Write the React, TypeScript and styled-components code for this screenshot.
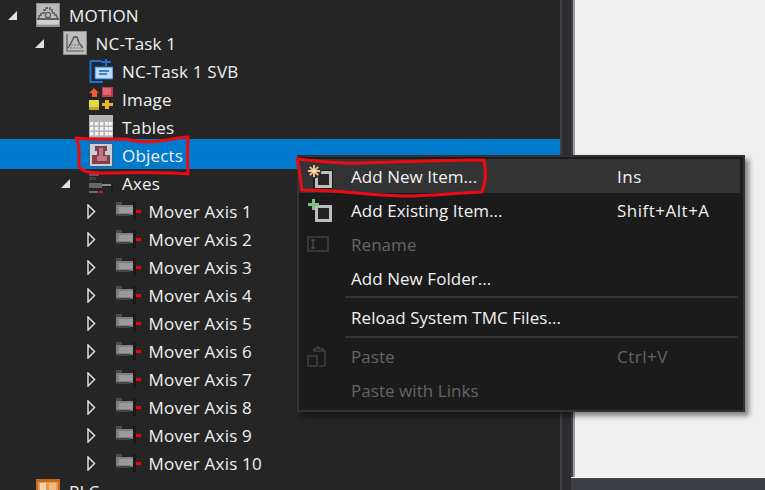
import React from 'react';
import styled, { createGlobalStyle } from 'styled-components';

const Global = createGlobalStyle`
  html, body { margin: 0; padding: 0; background: #252526; overflow: hidden; }
  * { box-sizing: border-box; }
`;

const Shell = styled.div`
  position: relative;
  display: flex;
  width: 765px;
  height: 490px;
  overflow: hidden;
  font-family: "Open Sans", "Noto Sans", sans-serif;
  font-size: 17px;
`;

const TreePane = styled.div`
  width: 560px;
  height: 490px;
  padding-top: 1px;
  background: #252526;
  overflow: hidden;
  flex: none;
  letter-spacing: 0.2px;
`;

const Splitter = styled.div`
  width: 11px;
  flex: none;
  background: #2d2d30;
  border-left: 2px solid #3f3f46;
`;

const DocColumn = styled.div`
  flex: 1;
  display: flex;
  flex-direction: column;
`;

const DocArea = styled.div`
  flex: 1;
  background: #efefef;
  border-left: 2px solid #3f3f46;
  box-shadow: inset 2px 0 0 #9a9a9a;
`;

const StatusStrip = styled.div`
  height: 13px;
  flex: none;
  background: #3f3f46;
  border-top: 1px solid #ffffff;
`;

const Row = styled.div<{ $level: number; $selected?: boolean }>`
  display: flex;
  align-items: center;
  height: ${p => (p.$selected ? 30 : 28)}px;
  margin-top: ${p => (p.$selected ? -2 : 0)}px;
  padding-top: ${p => (p.$selected ? 2 : 0)}px;
  padding-left: ${p => p.$level * 26.5}px;
  background: ${p => (p.$selected ? '#007acc' : 'transparent')};
  color: #f1f1f1;
  white-space: nowrap;
`;

const Expander = styled.span`
  width: 36px;
  height: 28px;
  flex: none;
  display: flex;
  align-items: center;
  padding-left: 7px;
`;

const IconSlot = styled.span`
  width: 33px;
  height: 24px;
  flex: none;
  display: flex;
  align-items: center;
`;

const Label = styled.span`
  line-height: 28px;
  padding-top: 1px;
`;

const Menu = styled.div`
  position: absolute;
  left: 297px;
  top: 155px;
  width: 448px;
  height: 257px;
  padding: 2px 3px 2px 0;
  background: #1b1b1c;
  border: 2px solid #333337;
  box-shadow: 4px 4px 5px rgba(0, 0, 0, 0.45);
  color: #f1f1f1;
  letter-spacing: 0.05px;
`;

const MenuItem = styled.div<{ $active?: boolean; $disabled?: boolean }>`
  display: flex;
  align-items: center;
  height: 34px;
  background: ${p => (p.$active ? '#333334' : 'transparent')};
  color: ${p => (p.$disabled ? '#656565' : '#f1f1f1')};
`;

const MenuIcon = styled.span`
  width: 52px;
  flex: none;
  display: flex;
  align-items: center;
  padding-left: 8px;
`;

const MenuText = styled.span`
  width: 266px;
  flex: none;
`;

const Shortcut = styled.span`
  letter-spacing: 0.5px;
`;

const Separator = styled.div`
  height: 2px;
  margin: 1px 2px 1px 46px;
  background: #333337;
`;

const ReloadItem = styled(MenuItem)`
  height: 36px;
`;

const Scribble = styled.svg`
  position: absolute;
  left: 0;
  top: 0;
  pointer-events: none;
`;

const Open = () => (
  <svg width="11" height="11" viewBox="0 0 11 11"><path d="M10 1v9H1z" fill="#e2e2e2" /></svg>
);
const Closed = () => (
  <svg width="9" height="15" viewBox="0 0 9 15"><path d="M1 1l6.5 6.5L1 14z" fill="none" stroke="#dcdcdc" strokeWidth="1.5" /></svg>
);

const MotionIcon = () => (
  <svg width="24" height="24" viewBox="0 0 24 24">
    <rect width="24" height="24" fill="#8f8f8f" />
    <rect x="1" y="1" width="22" height="21" fill="#b9b9b9" />
    <path
      d="M3 15v-3h2v-2h3V7h2V5h4v2h2v3h3v2h2v3"
      fill="none" stroke="#4f4f4f" strokeWidth="1.4" strokeDasharray="3 1"
    />
    <circle cx="12" cy="12" r="2.6" fill="none" stroke="#5e5e5e" strokeWidth="1.2" />
    <rect x="1" y="15" width="22" height="2" fill="#5f5f5f" />
    <rect x="1" y="17" width="22" height="4" fill="#cfcfcf" />
  </svg>
);
const TaskIcon = () => (
  <svg width="24" height="24" viewBox="0 0 24 24">
    <rect width="24" height="24" fill="#8f8f8f" />
    <rect x="1" y="1" width="22" height="22" fill="#bdbdbd" />
    <path d="M4 3v17h17" fill="none" stroke="#5a5a5a" strokeWidth="1.2" />
    <path d="M5 17l3-5 3-6h3l2 6 4 5" fill="none" stroke="#4c4c4c" strokeWidth="1.3" />
    <path d="M8 14h9M7 17h12" stroke="#777" strokeWidth="1.2" strokeDasharray="2 1" />
  </svg>
);
const SvbIcon = () => (
  <svg width="24" height="24" viewBox="0 0 24 24">
    <path d="M12 2H1.5v21H14" fill="none" stroke="#1a73d8" strokeWidth="2" />
    <path d="M12 3h10M17 0v7" stroke="#1a73d8" strokeWidth="2" />
    <rect x="6" y="8" width="18" height="12" fill="#bcdcf8" stroke="#1a73d8" />
    <path d="M10 12h10M10 15h8" stroke="#1a5fb0" strokeWidth="1.4" />
  </svg>
);
const ImageIcon = () => (
  <svg width="24" height="24" viewBox="0 0 24 24">
    <path d="M5 1l5 5H8v4H3V6H0z" fill="#f0583a" />
    <rect x="13" width="11" height="10" fill="#c23b4c" />
    <rect x="14" y="1" width="8" height="7" fill="#df6573" />
    <rect y="13" width="10" height="10" fill="#e6d94a" />
    <rect y="20" width="10" height="3" fill="#b9a92a" />
    <path d="M16 13h4v3h4v3h-4v3h-4v-3h-3v-3h3z" fill="#eeb32c" />
  </svg>
);
const TablesIcon = () => (
  <svg width="24" height="24" viewBox="0 0 24 24">
    <rect width="24" height="24" fill="#b4b4b4" />
    <rect y="22" width="24" height="2" fill="#8c8c8c" />
    {[7, 12, 17].flatMap(y =>
      [1, 6, 11, 16, 20].map(x => <rect key={`${x}-${y}`} x={x} y={y} width="3.4" height="3.4" fill="#f4f4f4" />)
    )}
  </svg>
);
const ObjectsIcon = () => (
  <svg width="24" height="24" viewBox="0 0 24 24">
    <rect width="24" height="24" fill="#3d5f8a" />
    <rect x="1" y="1" width="22" height="22" fill="#c9cdd6" />
    <path d="M6 3h12v5h-2v4h5v9H3v-9h5V8H6z" fill="#8a3c4a" />
    <path d="M10 5h4v8h4v5H8v-5h2z" fill="#b97c84" />
  </svg>
);
const AxesIcon = () => (
  <svg width="24" height="24" viewBox="0 0 24 24">
    <rect x="0" y="1" width="10" height="4" fill="#5e5e5e" />
    <rect x="0" y="6" width="7" height="3" fill="#3f3f3f" />
    <rect x="0" y="12" width="13" height="5" fill="#666" />
    <rect x="13" y="13" width="9" height="2" fill="#8a8a8a" />
    <rect x="0" y="20" width="9" height="2" fill="#6a6a6a" />
    <rect x="10" y="20" width="4" height="2" fill="#e81010" />
    <rect x="22" y="15" width="2" height="6" fill="#1a1a1a" />
  </svg>
);
const MoverIcon = () => (
  <svg width="25" height="18" viewBox="0 0 25 18">
    <rect x="0" y="0" width="6" height="3" fill="#4a4a4a" />
    <rect x="0" y="3" width="17" height="10" fill="#7f7f7f" />
    <rect x="3" y="5" width="14" height="6" fill="#9a9a9a" />
    <rect x="0" y="12" width="14" height="2" fill="#454545" />
    <rect x="17" y="0" width="3" height="18" fill="#1a1a1a" />
    <rect x="20" y="8" width="5" height="3" fill="#f40000" />
  </svg>
);
const PlcIcon = () => (
  <svg width="24" height="24" viewBox="0 0 24 24">
    <rect width="24" height="24" fill="#c46a1b" />
    <rect x="2" y="3" width="20" height="19" fill="#e39a52" />
    <rect x="4" y="4" width="6" height="16" fill="#f6d3ad" />
    <rect x="13" y="4" width="7" height="16" fill="#f1b77d" />
  </svg>
);

const NewBadge = () => (
  <svg width="26" height="26" viewBox="0 0 26 26">
    <rect x="6" y="7" width="20" height="19" fill="#1b1b1c" />
    <rect x="9.5" y="9.5" width="14" height="14" fill="#262627" stroke="#bdbdbd" strokeWidth="3" />
    <circle cx="7" cy="8" r="7.5" fill="#333334" />
    <path d="M7 2v12M1 8h12M2.8 3.8l8.4 8.4M11.2 3.8l-8.4 8.4" stroke="#f3c48e" strokeWidth="1.9" />
    <circle cx="7" cy="8" r="1.6" fill="#fbe6cc" />
  </svg>
);
const ExistingBadge = () => (
  <svg width="26" height="26" viewBox="0 0 26 26">
    <rect x="9.5" y="9.5" width="14" height="14" fill="#242425" stroke="#bdbdbd" strokeWidth="3" />
    <path d="M5 2h3v4h4v3H8v4H5V9H1V6h4z" fill="#7cc47f" />
  </svg>
);
const RenameBadge = () => (
  <svg width="24" height="16" viewBox="0 0 24 16">
    <rect x="1" y="1" width="20" height="14" fill="none" stroke="#383838" strokeWidth="2" />
    <path d="M4 4h4M4 12h4M6 4v8" stroke="#5a5a5a" />
  </svg>
);
const PasteBadge = () => (
  <svg width="20" height="22" viewBox="0 0 20 22">
    <path d="M7 6V4h2l2-2 2 2h3v2M16 6h2v15h-6" fill="none" stroke="#4d4d4d" strokeWidth="1.2" />
    <path d="M6 6h10" stroke="#4d4d4d" />
    <rect x="1" y="11" width="9" height="10" fill="none" stroke="#4d4d4d" strokeWidth="1.2" />
  </svg>
);

type TreeRow = { level: number; label: string; icon: React.ReactNode; open?: boolean; closed?: boolean; selected?: boolean };

const rows: TreeRow[] = [
  { level: 0, label: 'MOTION', icon: <MotionIcon />, open: true },
  { level: 1, label: 'NC-Task 1', icon: <TaskIcon />, open: true },
  { level: 2, label: 'NC-Task 1 SVB', icon: <SvbIcon /> },
  { level: 2, label: 'Image', icon: <ImageIcon /> },
  { level: 2, label: 'Tables', icon: <TablesIcon /> },
  { level: 2, label: 'Objects', icon: <ObjectsIcon />, selected: true },
  { level: 2, label: 'Axes', icon: <AxesIcon />, open: true },
  ...Array.from({ length: 10 }, (_, i) => ({
    level: 3,
    label: `Mover Axis ${i + 1}`,
    icon: <MoverIcon />,
    closed: true,
  })),
  { level: 0, label: 'PLC', icon: <PlcIcon /> },
];

export default function App() {
  return (
    <Shell>
      <Global />
      <TreePane>
        {rows.map(r => (
          <Row key={r.label} $level={r.level} $selected={r.selected}>
            <Expander>{r.open && <Open />}{r.closed && <Closed />}</Expander>
            <IconSlot>{r.icon}</IconSlot>
            <Label>{r.label}</Label>
          </Row>
        ))}
      </TreePane>
      <Splitter />
      <DocColumn>
        <DocArea />
        <StatusStrip />
      </DocColumn>
      <Menu>
        <MenuItem $active>
          <MenuIcon><NewBadge /></MenuIcon>
          <MenuText>Add New Item...</MenuText>
          <Shortcut>Ins</Shortcut>
        </MenuItem>
        <MenuItem>
          <MenuIcon><ExistingBadge /></MenuIcon>
          <MenuText>Add Existing Item...</MenuText>
          <Shortcut>Shift+Alt+A</Shortcut>
        </MenuItem>
        <MenuItem $disabled>
          <MenuIcon><RenameBadge /></MenuIcon>
          <MenuText>Rename</MenuText>
        </MenuItem>
        <MenuItem>
          <MenuIcon />
          <MenuText>Add New Folder...</MenuText>
        </MenuItem>
        <Separator />
        <ReloadItem>
          <MenuIcon />
          <MenuText>Reload System TMC Files...</MenuText>
        </ReloadItem>
        <Separator />
        <MenuItem $disabled>
          <MenuIcon><PasteBadge /></MenuIcon>
          <MenuText>Paste</MenuText>
          <Shortcut>Ctrl+V</Shortcut>
        </MenuItem>
        <MenuItem $disabled>
          <MenuIcon />
          <MenuText>Paste with Links</MenuText>
        </MenuItem>
      </Menu>
      <Scribble width="765" height="490" viewBox="0 0 765 490">
        <path
          d="M76 138C95 140 115 139 126 139C150 146 170 138 188 137C187 150 187 162 188 174C160 171 125 173 100 173C90 173 82 172 79 166C78 158 82 150 76 138Z"
          fill="none" stroke="#ee0a12" strokeWidth="3" strokeLinejoin="round"
        />
        <path
          d="M297 159C320 161 335 164 360 163C400 162 445 160 484 160C486 170 486 182 482 192C455 193 430 196 405 196C375 196 340 190 302 190C300 180 300 170 297 159Z"
          fill="none" stroke="#ee0a12" strokeWidth="3" strokeLinejoin="round"
        />
      </Scribble>
    </Shell>
  );
}
